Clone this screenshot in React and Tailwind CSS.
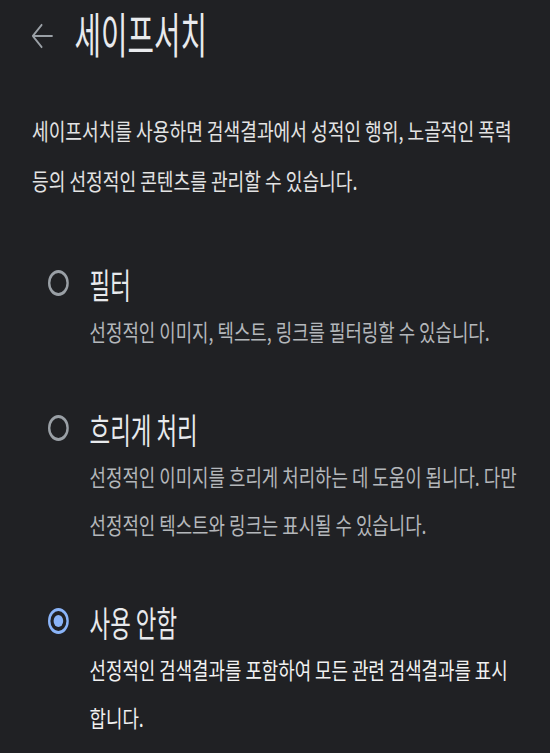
import { useState } from 'react';

const options = [
  {
    id: 'filter',
    label: '필터',
    lines: ['선정적인 이미지, 텍스트, 링크를 필터링할 수 있습니다.'],
  },
  {
    id: 'blur',
    label: '흐리게 처리',
    lines: [
      '선정적인 이미지를 흐리게 처리하는 데 도움이 됩니다. 다만',
      '선정적인 텍스트와 링크는 표시될 수 있습니다.',
    ],
  },
  {
    id: 'off',
    label: '사용 안함',
    lines: ['선정적인 검색결과를 포함하여 모든 관련 검색결과를 표시', '합니다.'],
  },
];

function Radio({ checked }) {
  if (checked) {
    return (
      <span className="flex h-[26px] w-[26px] shrink-0 items-center justify-center rounded-full border-[3px] border-[#8ab4f8]">
        <span className="h-[12px] w-[12px] rounded-full bg-[#8ab4f8]" />
      </span>
    );
  }
  return <span className="h-[26px] w-[26px] shrink-0 rounded-full border-[3px] border-[#9aa0a6]" />;
}

export default function App() {
  const [selected, setSelected] = useState('off');

  return (
    <div className="h-[753px] w-[550px] overflow-hidden bg-[#202124] font-['Noto_Sans_CJK_KR',sans-serif]">
      {/* the shot is squeezed sideways, so lay out wider and scale back */}
      <div className="w-[688px] origin-top-left scale-x-[0.8]">
        <div className="flex h-[64px] items-center pl-[39px]">
          <svg width="28" height="28" viewBox="0 0 28 28" fill="none" stroke="#9aa0a6" strokeWidth="2.2" strokeLinecap="round" strokeLinejoin="round" className="mt-[8px]">
            <path d="M26 14H2M13 3L2 14l11 11" />
          </svg>
          <h1 className="ml-[26px] w-[200px] whitespace-nowrap text-[48px] font-normal leading-[60px] text-[#e8eaed]">
            <span className="inline-block origin-left scale-x-[0.75]">세이프서치</span>
          </h1>
        </div>

        <div className="mt-[41px] pl-[40px] text-[23px] leading-[50px] text-[#e3e3e3]">
          <div className="whitespace-nowrap">
            <span className="inline-block origin-left scale-x-[0.985]">세이프서치를 사용하면 검색결과에서 성적인 행위, 노골적인 폭력</span>
          </div>
          <div className="whitespace-nowrap">
            <span className="inline-block origin-left scale-x-[0.985]">등의 선정적인 콘텐츠를 관리할 수 있습니다.</span>
          </div>
        </div>

        <div className="mt-[54px] flex flex-col gap-[49px] pl-[60px]">
          {options.map(o => {
            const on = selected === o.id;
            return (
              <button key={o.id} className="flex flex-col items-start text-left" onClick={() => setSelected(o.id)}>
                <div className="flex h-[48px] items-center">
                  <Radio checked={on} />
                  <span className="ml-[26px] inline-block origin-left scale-x-[0.8] whitespace-nowrap text-[35px] leading-none text-[#e8eaed]">
                    {o.label}
                  </span>
                </div>
                <div className={'pl-[52px] text-[23px] leading-[48px] ' + (on ? 'text-[#f1f1f1]' : 'text-[#b4b7bb]')}>
                  {o.lines.map(l => (
                    <div key={l} className="whitespace-nowrap">
                      <span className="inline-block origin-left scale-x-[0.97]">{l}</span>
                    </div>
                  ))}
                </div>
              </button>
            );
          })}
        </div>
      </div>
    </div>
  );
}
